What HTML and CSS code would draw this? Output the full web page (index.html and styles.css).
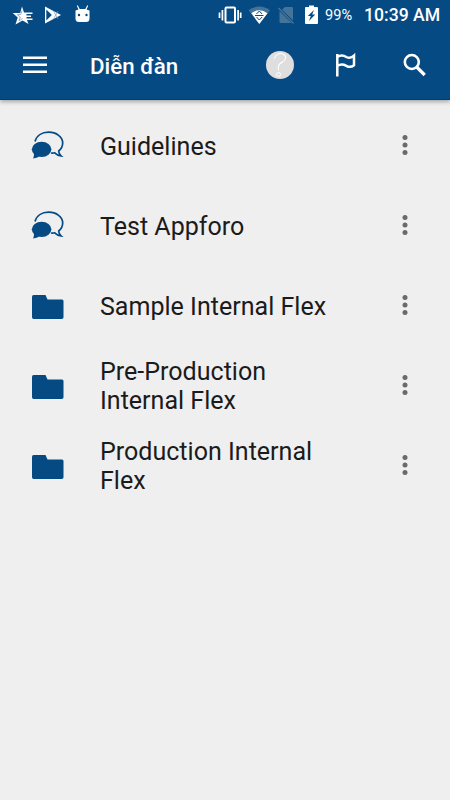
FILE: index.html
```html
<!DOCTYPE html>
<html lang="vi">
<head>
<meta charset="utf-8">
<title>Diễn đàn</title>
<link rel="stylesheet" href="styles.css">
</head>
<body>
<svg class="defs" width="0" height="0">
  <symbol id="chat" viewBox="0 0 34 32">
    <path d="M4 11.500C5.500 5.500 11 2.200 17.500 2.200 25.500 2.200 31.700 7 31.700 13c0 3.500-1.500 6-4 8 0 2 .8 3.500 2.300 4.800-2.800-.3-4.800-1.500-6.300-3-1.500.4-2.500.4-3.700.2" fill="none" stroke="currentColor" stroke-width="1.700"/>
    <ellipse cx="10.600" cy="19.300" rx="9.800" ry="7.600"/>
    <path d="M2.500 22c.8 2 .7 4-.5 6.500 3.500-.3 5.500-1.500 8-3.500z"/>
  </symbol>
  <symbol id="folder" viewBox="0 0 34 32">
    <path d="M2.500 5H14.500l2 4.500H31q1.500 0 1.500 1.500V27.300q0 1.700-1.700 1.700H2.700Q1 29 1 27.300V7Q1 5 2.500 5z"/>
  </symbol>
  <symbol id="more" viewBox="0 0 6 22">
    <circle cx="3" cy="3.500" r="2.500"/><circle cx="3" cy="11" r="2.500"/><circle cx="3" cy="18.500" r="2.500"/>
  </symbol>
</svg>
<header class="header">
  <div class="status">
    <svg class="notices" viewBox="0 0 100 30" fill="#fff">
      <path d="M22 6.500l2 6h8.500v1.500h-6v1.500H31V17h-4.500v1.500h6V20h-5.500l1.500 4-6-3.500-7 4 2.200-7-5-4.500h7.500z"/>
      <path d="M22 10.500l-1.200 4-3.500.2 3 2.300-1.300 4 3.500-2.500" fill="none" stroke="#7d9bbc" stroke-width=".8"/>
      <path d="M45 6.500L61 15 45 23.500z"/>
      <path d="M46.300 9.500l5.500 5.500-5.500 5.500z" fill="#064a84"/>
      <path d="M53.500 11l4.500 8M53.500 19l4.500-8" stroke="#7d9bbc" stroke-width=".7"/>
      <path d="M75.500 10.500l3-1-1.700-3.800.9-.4 2 3.700h5.600l2-3.700.9.400-1.700 3.800 3 1V18.500q0 3.500-3.500 3.500h-7q-3.500 0-3.500-3.500z"/>
      <circle cx="79" cy="15" r="1.200" fill="#064a84"/><circle cx="86.500" cy="15" r="1.200" fill="#064a84"/>
    </svg>
    <div class="indicators">
      <svg class="signals" viewBox="216 0 104 30" fill="#fff">
        <rect x="225.500" y="7.500" width="9.500" height="15" rx="1" fill="none" stroke="#fff" stroke-width="2"/>
        <path d="M222.400 10v10.500M219.500 12.500v5.500M238.100 10v10.500M240.700 12.500v5.500" stroke="#fff" stroke-width="1.700"/>
        <path d="M248.500 10.300Q259.500 2.800 270 10.300l-10.700 13.700z" fill="#447499"/>
        <path d="M251.300 13.300Q259.500 7 267.500 13.300l-8.200 10.700z"/>
        <path d="M256.500 14l2.800-3 2.800 3M256.500 17l2.800 3 2.800-3M255 15.500h8.500" fill="none" stroke="#064a84"/>
        <path d="M285 7h7q1 0 1 1v12.500L282 9.500zM279.500 11l12 12h-11q-1 0-1-1z" fill="#447499"/>
        <path d="M278.500 8l15 15.500" stroke="#447499" stroke-width="1.400"/>
        <path d="M309 5.500h5V7h3q1 0 1 1v15q0 1-1 1h-11q-1 0-1-1V8q0-1 1-1h3z"/>
        <path d="M314 10l-6.200 6h3l-1.800 5 6.200-6.500h-3z" fill="#064a84"/>
      </svg>
      <span class="battery">99%</span>
      <span class="clock">10:39 AM</span>
    </div>
  </div>
  <div class="toolbar">
    <svg class="menu" viewBox="0 0 24 18"><path d="M0 1.700h24M0 8.700h24M0 15.700h24" stroke="#fff" stroke-width="2.500"/></svg>
    <h1 class="title">Diễn đàn</h1>
    <svg class="actions" viewBox="264 48 166 36" fill="none" stroke="#fff">
      <circle cx="280" cy="65" r="14" fill="#dedede" stroke="none"/>
      <path d="M274.500 58.500c.5-3.500 5-6 8.500-4.500 4.500 2 2.500 6-.5 8-3 1.800-5 3-4 8.500" stroke-width="1.100"/>
      <circle cx="278.500" cy="74.500" r="2"/>
      <path d="M337.300 54v22.500M337.300 57c2.700-1.800 6-2 9 0 3 1.500 5.500.8 7.700-1.300v9.500c-2.500 2-5 2.200-7.700.6-3-1.700-6-1.900-9 .3" stroke-width="2.500"/>
      <circle cx="411.800" cy="62" r="7" stroke-width="2.600"/>
      <path d="M416.700 67l8 8" stroke-width="3.200"/>
    </svg>
  </div>
</header>
<main class="list">
  <div class="row"><svg class="icon"><use href="#chat"/></svg><span class="name">Guidelines</span><svg class="more"><use href="#more"/></svg></div>
  <div class="row"><svg class="icon"><use href="#chat"/></svg><span class="name">Test Appforo</span><svg class="more"><use href="#more"/></svg></div>
  <div class="row"><svg class="icon"><use href="#folder"/></svg><span class="name">Sample Internal Flex</span><svg class="more"><use href="#more"/></svg></div>
  <div class="row"><svg class="icon"><use href="#folder"/></svg><span class="name">Pre-Production Internal Flex</span><svg class="more"><use href="#more"/></svg></div>
  <div class="row"><svg class="icon"><use href="#folder"/></svg><span class="name">Production Internal Flex</span><svg class="more"><use href="#more"/></svg></div>
</main>
</body>
</html>
```
FILE: styles.css
```css
* { box-sizing: border-box; }
body {
  margin: 0;
  height: 800px;
  overflow: hidden;
  background: #efefef;
  font-family: Roboto, sans-serif;
}
svg { display: block; flex: none; }
.defs { position: absolute; }
.header {
  height: 100px;
  background: #064a84;
  border-bottom: 1px solid #033b78;
  box-shadow: 0 2px 4px rgba(0, 0, 0, .3);
  color: #fff;
}
.status {
  display: flex;
  justify-content: space-between;
  height: 30px;
  padding-right: 11px;
}
.notices { width: 100px; height: 30px; }
.indicators { display: flex; line-height: 31px; white-space: nowrap; }
.signals { width: 104px; height: 30px; margin-right: 5px; }
.battery { width: 39px; font-size: 14.6px; }
.clock { width: 75px; font-size: 17.6px; font-weight: 500; }
.toolbar {
  display: flex;
  align-items: center;
  height: 70px;
  padding: 0 20px 0 23px;
}
.menu { width: 24px; height: 18px; margin-top: -1px; }
.title {
  flex: 1;
  margin: 2px 0 0 43px;
  font-size: 22.3px;
  font-weight: 500;
  line-height: 30px;
}
.actions { width: 166px; height: 36px; margin-top: 2px; }
.list { padding-top: 6px; }
.row {
  display: flex;
  align-items: center;
  height: 80px;
  padding: 0 42px 0 31px;
}
.icon { width: 34px; height: 32px; fill: #064a84; color: #064a84; }
.name {
  width: 240px;
  margin: .6px 0 0 35px;
  color: #1b1b1b;
  font-size: 25.05px;
  line-height: 29px;
}
.more { width: 6px; height: 22px; margin: -2px 0 0 auto; fill: #6a6a6a; }
```
